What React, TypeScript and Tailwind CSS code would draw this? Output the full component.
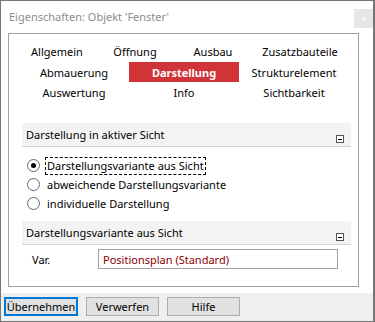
import { useState } from "react";

const font = { fontFamily: '"Noto Sans", "Open Sans", sans-serif' };

function Radio({ checked, label, focused }: { checked?: boolean; label: string; focused?: boolean }) {
  return (
    <div className="flex h-[19px] items-center">
      <span className="flex h-[13px] w-[13px] items-center justify-center rounded-full border border-[#666] bg-white">
        {checked && <span className="h-[5px] w-[5px] rounded-full bg-black" />}
      </span>
      <span
        className={
          "ml-[5px] flex h-[18px] items-center px-[1px] text-[11px] leading-none text-black " +
          (focused ? "border border-dashed border-black" : "border border-transparent")
        }
      >
        {label}
      </span>
    </div>
  );
}

function SectionHeader({ title }: { title: string }) {
  return (
    <div className="flex h-[24px] items-end justify-between border-b border-[#d4d4d4] bg-[#f3f3f3] pl-[4px] pr-[7px]">
      <span className="mb-[6px] text-[11px] leading-none text-black">{title}</span>
      <span className="mb-[3px] flex h-[8px] w-[8px] items-center justify-center border border-[#555] bg-white">
        <span className="h-[1px] w-[4px] bg-black" />
      </span>
    </div>
  );
}

export default function App() {
  const [active] = useState("Darstellung");

  const row1 = [
    { label: "Allgemein", w: "w-[78px]" },
    { label: "Öffnung", w: "w-[78px]" },
    { label: "Ausbau", w: "w-[78px]" },
    { label: "Zusatzbauteile", w: "w-[96px]" },
  ];
  const row2 = ["Abmauerung", "Darstellung", "Strukturelement"];
  const row3 = ["Auswertung", "Info", "Sichtbarkeit"];

  const tab = (label: string) => (
    <div
      key={label}
      className={
        "flex h-[20px] w-[110px] items-center justify-center text-[11px] leading-none " +
        (label === active ? "bg-[#d13438] font-bold text-white" : "text-black")
      }
    >
      {label}
    </div>
  );

  return (
    <div style={font} className="flex h-[322px] w-[375px] flex-col border-l border-t border-r-2 border-b border-[#767676] bg-white">
      {/* title bar */}
      <div className="flex h-[32px] items-start justify-between">
        <span className="mt-[10px] ml-[8px] text-[11px] leading-none text-[#8c8c8c]">
          Eigenschaften: Objekt 'Fenster'
        </span>
        <span className="mt-[8px] flex h-[19px] w-[19px] items-center justify-center bg-[#e6e6e6] text-[9px] leading-none text-white">
          ×
        </span>
      </div>

      {/* panel */}
      <div className="ml-[7px] flex h-[254px] w-[351px] flex-col border border-[#a0a0a0]">
        <div className="flex flex-col pt-[7px]">
          <div className="ml-[9px] flex h-[21px] items-center">
            {row1.map((t) => (
              <div key={t.label} className={"flex justify-center text-[11px] leading-none text-black " + t.w}>
                {t.label}
              </div>
            ))}
          </div>
          <div className="ml-[10px] flex h-[20px] items-center">{row2.map(tab)}</div>
          <div className="ml-[10px] flex h-[21px] items-center">{row3.map(tab)}</div>
        </div>

        <div className="mt-[20px] ml-[13px] mr-[7px] flex flex-col">
          <SectionHeader title="Darstellung in aktiver Sicht" />
          <div className="flex flex-col pt-[9px] pl-[5px]">
            <Radio checked focused label="Darstellungsvariante aus Sicht" />
            <Radio label="abweichende Darstellungsvariante" />
            <Radio label="individuelle Darstellung" />
          </div>

          <div className="mt-[8px]">
            <SectionHeader title="Darstellungsvariante aus Sicht" />
          </div>
          <div className="mt-[4px] flex items-center">
            <span className="ml-[10px] w-[66px] text-[11px] leading-none text-black">Var.</span>
            <div className="flex h-[20px] w-[240px] items-center border border-[#a0a0a0] pl-[4px] text-[11px] leading-none text-[#8b0000]">
              Positionsplan (Standard)
            </div>
          </div>
        </div>
      </div>

      {/* buttons */}
      <div className="mt-[6px] flex flex-1 items-start bg-[#efefef] pt-[4px] pl-[3px]">
        <button className="flex h-[19px] w-[74px] items-center justify-center border-2 border-[#0078d7] bg-[#e1e1e1] text-[11px] leading-none text-black">
          Übernehmen
        </button>
        <button className="ml-[8px] flex h-[19px] w-[73px] items-center justify-center border border-[#adadad] bg-[#e1e1e1] text-[11px] leading-none text-black">
          Verwerfen
        </button>
        <button className="ml-[8px] flex h-[19px] w-[73px] items-center justify-center border border-[#adadad] bg-[#e1e1e1] text-[11px] leading-none text-black">
          Hilfe
        </button>
      </div>
    </div>
  );
}
